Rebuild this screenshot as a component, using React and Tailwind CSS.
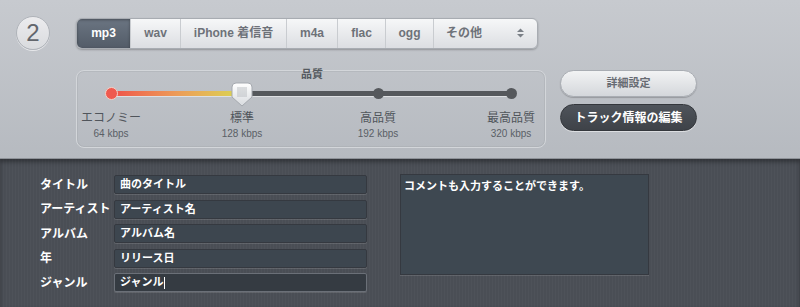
import React from "react";

const FONT = { fontFamily: "'Liberation Sans', 'Noto Sans CJK JP', sans-serif" };

const TABS = [
  { label: "mp3", w: "w-[53px]", active: true },
  { label: "wav", w: "w-[50px]" },
  { label: "iPhone 着信音", w: "w-[106px]" },
  { label: "m4a", w: "w-[51px]" },
  { label: "flac", w: "w-[48px]" },
  { label: "ogg", w: "w-[48px]" },
];

const STOPS = [
  { x: 110, name: "エコノミー", rate: "64 kbps" },
  { x: 241, name: "標準", rate: "128 kbps" },
  { x: 377, name: "高品質", rate: "192 kbps" },
  { x: 510, name: "最高品質", rate: "320 kbps" },
];

const FIELDS = [
  { label: "タイトル", value: "曲のタイトル" },
  { label: "アーティスト", value: "アーティスト名" },
  { label: "アルバム", value: "アルバム名" },
  { label: "年", value: "リリース日" },
  { label: "ジャンル", value: "ジャンル", focus: true },
];

function Handle() {
  return (
    <svg width="22" height="25" viewBox="0 0 22 25">
      <defs>
        <linearGradient id="hg" x1="0" y1="0" x2="0" y2="1">
          <stop offset="0" stopColor="#ffffff" />
          <stop offset="1" stopColor="#d8dbdf" />
        </linearGradient>
      </defs>
      <path d="M5 1 H17 Q21 1 21 5 V15 L11 24 L1 15 V5 Q1 1 5 1 Z" fill="url(#hg)" stroke="#a5a9af" strokeWidth="1" />
      {[7, 9, 11, 13, 15].map((x) => (
        <line key={x} x1={x} y1="5" x2={x} y2="15" stroke="#aeb2b8" strokeWidth="0.8" />
      ))}
    </svg>
  );
}

function QualitySlider() {
  return (
    <div className="relative w-[470px] h-[78px] rounded-lg border border-[#d3d6da] shadow-[inset_0_0_0_1px_rgba(150,155,160,0.25)]">
      <div className="absolute left-[224px] top-[-5px] text-[11px] font-bold text-[#555a60]">品質</div>
      {/* track */}
      <div className="absolute left-[34px] top-[20px] w-[400px] h-[5px] rounded-full bg-[#55585c] shadow-[0_1px_0_rgba(255,255,255,0.5)]" />
      <div className="absolute left-[34px] top-[20px] w-[131px] h-[5px] rounded-full bg-gradient-to-r from-[#ee4f4a] via-[#ec9b58] to-[#d8d652]" />
      {/* dots */}
      <div className="absolute left-[28px] top-[16px] w-[13px] h-[13px] rounded-full bg-[#ef5a4f] border border-[#f4d2c8]" />
      <div className="absolute left-[296px] top-[17px] w-[11px] h-[11px] rounded-full bg-[#55585c]" />
      <div className="absolute left-[429px] top-[17px] w-[11px] h-[11px] rounded-full bg-[#55585c]" />
      <div className="absolute left-[154px] top-[11px]">
        <Handle />
      </div>
      {STOPS.map((s) => (
        <div
          key={s.name}
          className="absolute top-[39px] w-[80px] -ml-[40px] flex flex-col items-center"
          style={{ left: s.x - 76 }}
        >
          <span className="text-[12px] leading-[16px] text-[#50555b]">{s.name}</span>
          <span className="text-[10px] leading-[16px] text-[#5a5f66]">{s.rate}</span>
        </div>
      ))}
    </div>
  );
}

export default function App() {
  return (
    <div className="w-[800px] h-[307px] overflow-hidden flex flex-col" style={FONT}>
      {/* top panel */}
      <div className="h-[158px] bg-gradient-to-b from-[#c7cacf] to-[#b6bac0] flex flex-col pt-[16px]">
        <div className="flex items-center pl-[16px] gap-[26px]">
          <div className="w-[34px] h-[34px] rounded-full bg-gradient-to-b from-[#ececee] to-[#d9dbde] border border-[#b0b4ba] flex items-center justify-center text-[24px] text-[#62666c] shadow-[0_1px_0_rgba(255,255,255,0.6)]">
            2
          </div>
          <div className="flex h-[31px] rounded-md border border-[#a8acb2] bg-gradient-to-b from-[#f6f7f8] to-[#dcdee2] shadow-[0_1px_2px_rgba(0,0,0,0.25)] overflow-hidden">
            {TABS.map((t) => (
              <div
                key={t.label}
                className={
                  t.active
                    ? `${t.w} flex items-center justify-center text-[12px] font-bold text-white bg-gradient-to-b from-[#6b7582] to-[#535c68] shadow-[inset_0_1px_3px_rgba(0,0,0,0.35)]`
                    : `${t.w} flex items-center justify-center text-[12px] font-bold text-[#6e7279] border-l border-[#c9ccd0]`
                }
              >
                {t.label}
              </div>
            ))}
            <div className="w-[104px] flex items-center justify-between pl-[12px] pr-[12px] text-[12px] font-bold text-[#6e7279] border-l border-[#c9ccd0]">
              <span>その他</span>
              <svg width="9" height="12" viewBox="0 0 9 12">
                <path d="M1 5 L4.5 1.5 L8 5 Z" fill="#7b8087" />
                <path d="M1 7 L4.5 10.5 L8 7 Z" fill="#7b8087" />
              </svg>
            </div>
          </div>
        </div>
        <div className="flex pl-[76px] mt-[20px] gap-[14px]">
          <QualitySlider />
          <div className="flex flex-col gap-[7px]">
            <div className="w-[137px] h-[27px] rounded-full bg-gradient-to-b from-[#f2f3f4] to-[#d4d7db] border border-[#a9adb3] shadow-[0_1px_1px_rgba(0,0,0,0.2)] flex items-center justify-center text-[11px] font-bold text-[#676b72]">
              詳細設定
            </div>
            <div className="w-[137px] h-[27px] rounded-full bg-gradient-to-b from-[#4f545b] to-[#3e4248] border border-[#34373c] shadow-[0_1px_0_rgba(255,255,255,0.5)] flex items-center justify-center text-[12px] font-bold text-white">
              トラック情報の編集
            </div>
          </div>
        </div>
      </div>
      {/* bottom panel */}
      <div className="flex-1 border-t border-[#8e9298] bg-[#4a4e55] bg-[repeating-linear-gradient(90deg,rgba(255,255,255,0.025)_0px,rgba(255,255,255,0.025)_1px,transparent_1px,transparent_3px)] shadow-[inset_0_3px_4px_rgba(0,0,0,0.35)] flex pl-[40px] pt-[16px] gap-[33px]">
        <div className="flex flex-col gap-[5.5px]">
          {FIELDS.map((f) => (
            <div key={f.label} className="flex items-center">
              <span className="w-[74px] text-[12px] font-bold text-white">{f.label}</span>
              <div
                className={`w-[253px] h-[19px] rounded-[2px] border ${
                  f.focus ? "border-[#6b7078] bg-[#353b42]" : "border-[#353940] bg-[#3d464f]"
                } shadow-[0_1px_0_rgba(255,255,255,0.12)] flex items-center pl-[5px] text-[11px] font-bold text-white`}
              >
                {f.value}
                {f.focus && <span className="w-px h-[12px] bg-white ml-[1px]" />}
              </div>
            </div>
          ))}
        </div>
        <div className="w-[249px] h-[101px] -mt-[1px] border border-[#353940] bg-[#3e4851] shadow-[0_1px_0_rgba(255,255,255,0.12)] px-[3px] pt-[3px] text-[11px] font-bold text-white">
          コメントも入力することができます。
        </div>
      </div>
    </div>
  );
}
